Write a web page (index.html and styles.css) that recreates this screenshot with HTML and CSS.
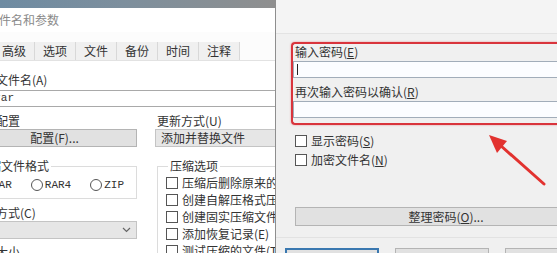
FILE: index.html
```html
<!DOCTYPE html>
<html lang="zh-CN">
<head>
    <meta charset="UTF-8">
    <title>压缩文件名和参数 - 输入密码</title>
    <link rel="stylesheet" href="styles.css">
</head>
<body>
    <div class="screen">
        <!-- 后面的窗口：压缩文件名和参数 -->
        <div class="win">
            <div class="win-top"></div>
            <div class="win-inner">
                <div class="win-title">压缩文件名和参数</div>
                <div class="tabs">
                    <span class="tab">常规</span>
                    <span class="tab">高级</span>
                    <span class="tab">选项</span>
                    <span class="tab">文件</span>
                    <span class="tab">备份</span>
                    <span class="tab">时间</span>
                    <span class="tab">注释</span>
                </div>
                <div class="page">
                    <div class="label">压缩文件名(A)</div>
                    <div class="field mono">新建1.rar</div>

                    <div class="cols">
                        <div class="col-left">
                            <div class="label row-gap">默认配置</div>
                            <div class="btn">配置(F)...</div>

                            <fieldset class="group">
                                <legend>压缩文件格式</legend>
                                <div class="radios">
                                    <span class="radio"><i></i>RAR</span>
                                    <span class="radio"><i></i>RAR4</span>
                                    <span class="radio"><i></i>ZIP</span>
                                </div>
                            </fieldset>

                            <div class="label row-gap">压缩方式(C)</div>
                            <div class="select">
                                <span>标准</span>
                                <svg width="9" height="6" viewBox="0 0 9 6"><polyline points="1,1 4.5,4.5 8,1" fill="none" stroke="#666" stroke-width="1.2"/></svg>
                            </div>
                            <div class="label dict">字典大小</div>
                        </div>

                        <div class="col-right">
                            <div class="label row-gap">更新方式(U)</div>
                            <div class="select wide"><span>添加并替换文件</span></div>

                            <fieldset class="group checks">
                                <legend>压缩选项</legend>
                                <div class="check"><i></i><span>压缩后删除原来的文件(D)</span></div>
                                <div class="check"><i></i><span>创建自解压格式压缩文件(X)</span></div>
                                <div class="check"><i></i><span>创建固实压缩文件(S)</span></div>
                                <div class="check"><i></i><span>添加恢复记录(E)</span></div>
                                <div class="check"><i></i><span>测试压缩的文件(T)</span></div>
                            </fieldset>
                        </div>
                    </div>
                </div>
            </div>
        </div>

        <!-- 前面的对话框：输入密码 -->
        <div class="dlg">
            <div class="dlg-head"></div>
            <div class="dlg-body">
                <div class="mark">
                    <div class="dlg-label">输入密码(<u>E</u>)</div>
                    <div class="pw"><span class="caret"></span></div>
                    <div class="dlg-label second">再次输入密码以确认(<u>R</u>)</div>
                    <div class="pw"></div>
                </div>

                <div class="dlg-checks">
                    <div class="check"><i></i><span>显示密码(<u>S</u>)</span></div>
                    <div class="check"><i></i><span>加密文件名(<u>N</u>)</span></div>
                </div>

                <div class="btn manage">整理密码(<u>O</u>)...</div>
            </div>
            <div class="dlg-foot">
                <span class="btn foot default">确定</span>
                <span class="btn foot">取消</span>
                <span class="btn foot">帮助</span>
            </div>
        </div>

        <!-- 红色箭头标注 -->
        <svg class="arrow" width="557" height="253" viewBox="0 0 557 253">
            <line x1="544" y1="184" x2="500" y2="145" stroke="#e2322f" stroke-width="3" stroke-linecap="round"/>
            <polygon points="489,135 507,141 497,153" fill="#e2322f"/>
        </svg>
    </div>
</body>
</html>
```

FILE: styles.css
```css
body {
    margin: 0;
    font-family: "Noto Sans CJK SC", "Liberation Sans", sans-serif;
    font-size: 12px;
    color: #333;
    background: #f0f0f0;
    text-autospace: no-autospace;
}

.screen {
    position: relative;
    display: flex;
    width: 557px;
    height: 253px;
    overflow: hidden;
}

/* 后面的窗口 */
.win {
    flex: none;
    width: 275px;
    height: 253px;
    overflow: hidden;
    background: #fcfcfc;
    border-right: 1px solid #8e8e8e;
}

.win-top {
    height: 8px;
    background: linear-gradient(90deg, #6e8ba2 0%, #7d8f9d 45%, #8f8f8f 100%);
}

.win-inner {
    margin-left: -47px;
    width: 360px;
}

.win-title {
    height: 24px;
    line-height: 24px;
    padding-left: 10px;
    color: #8a8a8a;
    background: #fff;
}

.tabs {
    display: flex;
    margin-top: 10px;
    height: 18px;
    border-bottom: 1px solid #e2e2e2;
}

.tab {
    width: 40px;
    line-height: 18px;
    text-align: center;
    background: #f0f0f0;
    border-right: 1px solid #d8d8d8;
}

.page {
    padding: 11px 0 0 19px;
    background: #fff;
}

.label {
    line-height: 16px;
    white-space: nowrap;
}

.row-gap {
    margin-top: 6px;
}

.dict {
    margin-top: 5px;
}

.mono {
    font-family: "Liberation Mono", monospace;
    font-size: 11px;
}

.field {
    margin-top: 2px;
    height: 15px;
    line-height: 15px;
    padding-left: 4px;
    text-indent: -18px;
    border: 1px solid #a9a9a9;
    background: #fff;
    white-space: nowrap;
    overflow: hidden;
}

.cols {
    display: flex;
    gap: 18px;
}

.col-left {
    flex: none;
    width: 165px;
}

.col-right {
    flex: none;
    width: 200px;
}

.btn {
    height: 16px;
    line-height: 16px;
    text-align: center;
    background: #e1e1e1;
    border: 1px solid #b4b4b4;
    white-space: nowrap;
}

.select {
    display: flex;
    justify-content: space-between;
    align-items: center;
    height: 16px;
    padding: 0 5px;
    background: #e6e6e6;
    border: 1px solid #c4c4c4;
    white-space: nowrap;
}

.select span {
    line-height: 16px;
}

.col-left .select span {
    margin-left: -6px;
}

.col-right .label {
    padding-left: 2px;
}

.group {
    margin: 11px 0 0;
    padding: 0 5px 5px;
    border: 1px solid #dcdcdc;
    min-width: 0;
}

.group legend {
    padding: 0 2px;
    margin-left: 2px;
    line-height: 16px;
}

.col-left .group legend {
    margin-left: -3px;
}

.radios {
    display: flex;
    gap: 19px;
    margin-top: 3px;
    line-height: 16px;
    font-family: "Liberation Mono", monospace;
    font-size: 11px;
}

.radio {
    display: flex;
    align-items: center;
    gap: 2px;
}

.radio i {
    width: 10px;
    height: 10px;
    border: 1px solid #555;
    border-radius: 50%;
    background: #fff;
}

.check {
    display: flex;
    align-items: center;
    gap: 4px;
    line-height: 17px;
    white-space: nowrap;
}

.check i {
    flex: none;
    width: 10px;
    height: 10px;
    border: 1px solid #555;
    background: #fff;
}

.checks {
    margin-left: 2px;
    padding-left: 8px;
}

/* 前面的对话框 */
.dlg {
    flex: 1;
    min-width: 0;
    overflow: hidden;
    background: #f0f0f0;
}

.dlg-head {
    height: 33px;
    background: #f4f4f4;
    border-bottom: 1px solid #e3e3e3;
}

.dlg-body {
    padding: 8px 0 11px 15px;
    border-bottom: 1px solid #e2e2e2;
}

.mark {
    margin-right: -60px;
    padding-bottom: 5px;
    border: 2px solid #d9343c;
    border-right: none;
    border-radius: 4px 0 0 4px;
    box-shadow: 0 0 2px rgba(217, 52, 60, 0.55);
}

.dlg-label {
    padding-left: 2px;
    line-height: 16px;
    white-space: nowrap;
}

.dlg-label.second {
    margin-top: 6px;
}

.pw {
    position: relative;
    margin-top: 1px;
    height: 15px;
    background: #fcfdff;
    border: 1px solid #a2adb9;
}

.caret {
    position: absolute;
    left: 3px;
    top: 2px;
    width: 1px;
    height: 11px;
    background: #222;
}

.dlg-checks {
    margin-top: 6px;
    padding-left: 4px;
}

.dlg-checks .check {
    line-height: 19px;
}

.manage {
    margin: 38px -40px 0 4px;
    height: 17px;
    line-height: 17px;
    padding-left: 0;
}

.dlg-foot {
    display: flex;
    gap: 16px;
    padding: 10px 0 0 9px;
}

.foot {
    flex: none;
    width: 92px;
    height: 21px;
    line-height: 21px;
}

.foot.default {
    border: 2px solid #3a78b0;
    width: 90px;
    height: 19px;
}

.arrow {
    position: absolute;
    left: 0;
    top: 0;
    pointer-events: none;
}
```
